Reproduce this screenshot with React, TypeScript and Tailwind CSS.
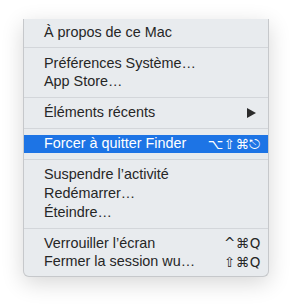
import React from 'react';

type Item =
  | { kind: 'sep' }
  | { kind: 'item'; label: string; shortcut?: string; submenu?: boolean; active?: boolean };

const items: Item[] = [
  { kind: 'item', label: 'À propos de ce Mac' },
  { kind: 'sep' },
  { kind: 'item', label: 'Préférences Système…' },
  { kind: 'item', label: 'App Store…' },
  { kind: 'sep' },
  { kind: 'item', label: 'Éléments récents', submenu: true },
  { kind: 'sep' },
  { kind: 'item', label: 'Forcer à quitter Finder', shortcut: '⌥⇧⌘⎋', active: true },
  { kind: 'sep' },
  { kind: 'item', label: 'Suspendre l’activité' },
  { kind: 'item', label: 'Redémarrer…' },
  { kind: 'item', label: 'Éteindre…' },
  { kind: 'sep' },
  { kind: 'item', label: 'Verrouiller l’écran', shortcut: '^⌘Q' },
  { kind: 'item', label: 'Fermer la session wu…', shortcut: '⇧⌘Q' },
];

const App: React.FC = () => {
  return (
    <div
      className="w-[292px] h-[304px] bg-white pt-[19px] pl-[23px]"
      style={{ fontFamily: '"Liberation Sans", Arial, sans-serif' }}
    >
      <div className="w-[246px] bg-[#e8ebee] border border-[#c6c8cb] border-t-0 rounded-b-[6px] shadow-[0_6px_22px_rgba(0,0,0,0.16)] pt-[4px] pb-[5px]">
        {items.map((it, i) =>
          it.kind === 'sep' ? (
            <div key={i} className="h-[12.5px] flex items-center">
              <div className="h-px w-full bg-[#d3d6da]" />
            </div>
          ) : (
            <div
              key={i}
              className={`h-[18.6px] flex items-center pl-[20px] pr-[7px] text-[14.4px] ${
                it.active ? 'bg-[#1d74e5] text-white' : 'text-[#262626]'
              }`}
            >
              <span className="flex-1">{it.label}</span>
              {it.shortcut && (
                <span
                  className="tracking-[0.5px] text-[13.5px]"
                  style={{ fontFamily: '"DejaVu Sans", "Liberation Sans", sans-serif' }}
                >
                  {it.shortcut}
                </span>
              )}
              {it.submenu && (
                <svg width="9" height="10" viewBox="0 0 9 10" className="mr-[5px]">
                  <path d="M0 0 L9 5 L0 10 Z" fill="#2b2b2b" />
                </svg>
              )}
            </div>
          )
        )}
      </div>
    </div>
  );
};

export default App;
